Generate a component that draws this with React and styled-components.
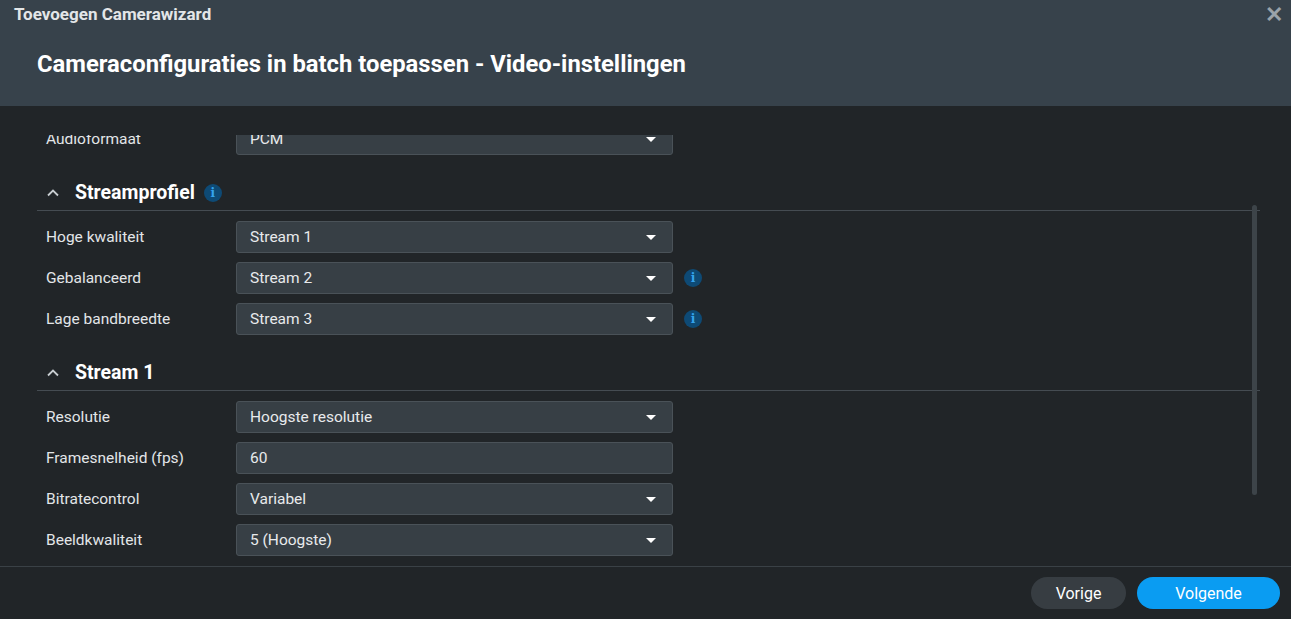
import React from "react";
import styled, { createGlobalStyle } from "styled-components";

const G = createGlobalStyle`
  html,body{margin:0;padding:0;background:#212528;}
  body{font-family:Roboto,"Liberation Sans",sans-serif;}
`;
const Win = styled.div`width:1291px;height:619px;display:flex;flex-direction:column;background:#212528;overflow:hidden;`;
const Header = styled.div`height:106px;background:#37424b;position:relative;box-sizing:border-box;padding:4px 0 0 14px;`;
const Caption = styled.div`color:#e3e6e8;font-size:17px;font-weight:700;`;
const Title = styled.div`color:#fff;font-size:23.8px;font-weight:700;margin:26px 0 0 23px;`;
const Close = styled.div`position:absolute;right:8px;top:2px;color:#9aa3aa;font-size:22px;font-weight:700;`;
const Body = styled.div`flex:1;position:relative;padding-top:29px;overflow:hidden;`;
const Scroll = styled.div`height:100%;overflow:hidden;`;
const Inner = styled.div`margin-top:-12px;padding:0 31px 0 37px;display:flex;flex-direction:column;`;
const Bar = styled.div`position:absolute;right:34px;top:99px;width:5px;height:290px;border-radius:3px;background:#3d4449;`;
const Row = styled.div`display:flex;align-items:center;height:32px;margin-bottom:9px;padding-left:9px;`;
const Label = styled.div`width:190px;color:#e3e6e8;font-size:15.5px;`;
const Field = styled.div`width:437px;height:32px;box-sizing:border-box;border:1px solid #4a5258;border-radius:3px;background:#373f45;display:flex;align-items:center;padding:0 16px 0 13px;color:#e8eaec;font-size:15.5px;justify-content:space-between;`;
const Caret = styled.span`width:0;height:0;border-left:5px solid transparent;border-right:5px solid transparent;border-top:5px solid #fff;`;
const Info = styled.span`width:18px;height:18px;border-radius:50%;background:#0e4a75;color:#35a4ee;font-size:12px;font-weight:700;display:inline-flex;align-items:center;justify-content:center;margin-left:${p=>p.$ml||10}px;font-family:"DejaVu Serif",serif;`;
const Section = styled.div`height:35px;border-bottom:1px solid #454c52;display:flex;align-items:center;margin:${p=>p.$first?11:11}px 0 10px;padding-left:9px;color:#fff;font-size:19.5px;font-weight:700;`;
const Chev = styled.svg`width:14px;height:14px;margin-right:15px;`;
const Footer = styled.div`height:52px;border-top:1px solid #3a4146;display:flex;justify-content:flex-end;align-items:center;gap:11px;padding-right:11px;`;
const Btn = styled.button`height:32px;border:none;border-radius:16px;font-family:inherit;font-size:16px;color:#fff;width:${p=>p.$w}px;background:${p=>p.$primary?"#0a9cf2":"#373d42"};`;

const Sel = ({l,v,info,input}) => (
  <Row><Label>{l}</Label><Field>{v}{!input && <Caret/>}</Field>{info && <Info $ml={11}>i</Info>}</Row>
);
const Sec = ({t,first,info}) => (
  <Section $first={first}>
    <Chev viewBox="0 0 14 14"><path d="M2 9.5L7 4.5L12 9.5" stroke="#c8cdd1" strokeWidth="1.8" fill="none"/></Chev>
    {t}{info && <Info $ml={9}>i</Info>}
  </Section>
);

export default function App(){
  return <Win><G/>
    <Header><Caption>Toevoegen Camerawizard</Caption><Title>Cameraconfiguraties in batch toepassen - Video-instellingen</Title><Close>✕</Close></Header>
    <Body><Scroll><Inner>
      <Sel l="Audioformaat" v="PCM"/>
      <Sec t="Streamprofiel" first info/>
      <Sel l="Hoge kwaliteit" v="Stream 1"/>
      <Sel l="Gebalanceerd" v="Stream 2" info/>
      <Sel l="Lage bandbreedte" v="Stream 3" info/>
      <Sec t="Stream 1"/>
      <Sel l="Resolutie" v="Hoogste resolutie"/>
      <Sel l="Framesnelheid (fps)" v="60" input/>
      <Sel l="Bitratecontrol" v="Variabel"/>
      <Sel l="Beeldkwaliteit" v="5 (Hoogste)"/>
    </Inner></Scroll><Bar/></Body>
    <Footer><Btn $w={95}>Vorige</Btn><Btn $w={143} $primary>Volgende</Btn></Footer>
  </Win>;
}
